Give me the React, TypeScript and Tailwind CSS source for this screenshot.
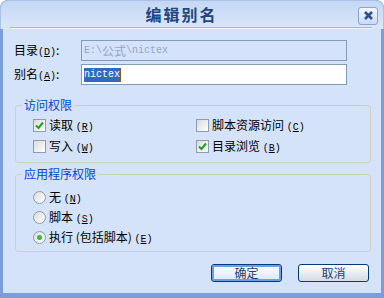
const cjk = "font-['SimSun','Noto_Sans_CJK_SC',sans-serif]";

function Hot({ children }: { children: string }) {
  return (
    <span className="font-['Liberation_Mono',monospace] text-[10px]">
      (<span className="underline">{children}</span>)
    </span>
  );
}

function CheckBox({ checked }: { checked?: boolean }) {
  return (
    <span className="w-[13px] h-[13px] border border-[#8b9cb3] bg-gradient-to-br from-[#dcdcd6] to-white flex items-center justify-center shrink-0">
      {checked && (
        <svg width="9" height="9" viewBox="0 0 9 9">
          <path d="M1 4.5 L3.5 7 L8 1.5" stroke="#21a121" strokeWidth="2" fill="none" />
        </svg>
      )}
    </span>
  );
}

function Radio({ checked }: { checked?: boolean }) {
  return (
    <span className="w-[13px] h-[13px] rounded-full border border-[#8b9cb3] bg-gradient-to-br from-[#dcdcd6] to-white flex items-center justify-center shrink-0">
      {checked && <span className="w-[5px] h-[5px] rounded-full bg-[#3db53d]" />}
    </span>
  );
}

function Group({ title, children }: { title: string; children: React.ReactNode }) {
  return (
    <fieldset className="ml-[12px] w-[356px] border border-[#d0d0bf] rounded-[3px] px-[17px]">
      <legend className="ml-[-11px] px-[2px] text-[12px] leading-[14px] text-[#0046d5]">{title}</legend>
      {children}
    </fieldset>
  );
}

export default function App() {
  return (
    <div className={`w-[384px] h-[298px] bg-white text-[12px] text-black ${cjk}`}>
      <div className="w-[384px] h-[298px] rounded-t-[8px] bg-[#7a9ed9] flex flex-col overflow-hidden">
        <div className="h-[29px] bg-gradient-to-b from-[#c4d7f4] to-[#dbe7f9] border border-b-0 border-[#aac2e8] rounded-t-[8px] flex items-center">
          <div className="flex-1 h-full flex flex-col">
            <div className="flex-1 flex items-center justify-center text-[16px] font-bold text-[#24467f] tracking-[2px] pl-[4px]">
              编辑别名
            </div>
            <div className="h-[2px] ml-[9px] mr-[-14px] border-t border-[#9ab6e2] border-b border-b-[#eef4fd]" />
          </div>
          <div className="w-[20px] h-[18px] mr-[5px] mt-[1px] rounded-[3px] border border-[#8aa4d0] bg-gradient-to-b from-[#f4f8fe] to-[#c9daf3] flex items-center justify-center">
            <svg width="11" height="11" viewBox="0 0 11 11">
              <path d="M2 2 L9 9 M9 2 L2 9" stroke="#2c4f8f" strokeWidth="2.6" />
            </svg>
          </div>
        </div>
        <div className="flex-1 mx-[3px] mb-[5px] bg-[#d4e3f9] flex flex-col">
          <div className="pt-[11px] pl-[11px] flex flex-col gap-[3px]">
            <div className="flex items-center h-[21px]">
              <span className="w-[67px]">
                目录<Hot>D</Hot>:
              </span>
              <div className="w-[266px] h-[21px] border border-[#7f9db9] flex items-center pl-[2px] text-[#8ea6cc]">
                <span className="font-['Liberation_Mono',monospace] text-[10px]">E:\</span>
                <span>公式</span>
                <span className="font-['Liberation_Mono',monospace] text-[10px]">\nictex</span>
              </div>
            </div>
            <div className="flex items-center h-[21px]">
              <span className="w-[67px]">
                别名<Hot>A</Hot>:
              </span>
              <div className="w-[266px] h-[21px] border border-[#7f9db9] bg-white flex items-center pl-[2px]">
                <span className="font-['Liberation_Mono',monospace] text-[10px] bg-[#316ac5] text-white leading-[14px]">
                  nictex
                </span>
                <span className="w-[1px] h-[14px] bg-[#8a5a20]" />
              </div>
            </div>
          </div>
          <div className="mt-[13px]">
            <Group title="访问权限">
              <div className="grid grid-cols-[163px_1fr] gap-y-[8px] pt-[7px] pb-[9px]">
                <label className="flex items-center gap-[3px] h-[13px]">
                  <CheckBox checked />
                  <span>读取 <Hot>R</Hot></span>
                </label>
                <label className="flex items-center gap-[3px] h-[13px]">
                  <CheckBox />
                  <span>脚本资源访问 <Hot>C</Hot></span>
                </label>
                <label className="flex items-center gap-[3px] h-[13px]">
                  <CheckBox />
                  <span>写入 <Hot>W</Hot></span>
                </label>
                <label className="flex items-center gap-[3px] h-[13px]">
                  <CheckBox checked />
                  <span>目录浏览 <Hot>B</Hot></span>
                </label>
              </div>
            </Group>
          </div>
          <div className="mt-[4px]">
            <Group title="应用程序权限">
              <div className="flex flex-col gap-[7px] pt-[10px] pb-[7px]">
                <label className="flex items-center gap-[3px] h-[13px]">
                  <Radio />
                  <span>无 <Hot>N</Hot></span>
                </label>
                <label className="flex items-center gap-[3px] h-[13px]">
                  <Radio />
                  <span>脚本 <Hot>S</Hot></span>
                </label>
                <label className="flex items-center gap-[3px] h-[13px]">
                  <Radio checked />
                  <span>执行 (包括脚本) <Hot>E</Hot></span>
                </label>
              </div>
            </Group>
          </div>
          <div className="flex justify-end gap-[16px] pr-[12px] mt-[12px]">
            <button className="w-[71px] h-[18px] rounded-[3px] border border-[#003c74] bg-gradient-to-b from-white to-[#dce6f4] shadow-[inset_0_0_0_2px_#6d9ee8] text-[12px] leading-[14px] text-[#1f3c74]">
              确定
            </button>
            <button className="w-[71px] h-[18px] rounded-[3px] border border-[#003c74] bg-gradient-to-b from-white to-[#d4dbe6] text-[12px] leading-[14px] text-[#1f3c74]">
              取消
            </button>
          </div>
        </div>
      </div>
    </div>
  );
}
